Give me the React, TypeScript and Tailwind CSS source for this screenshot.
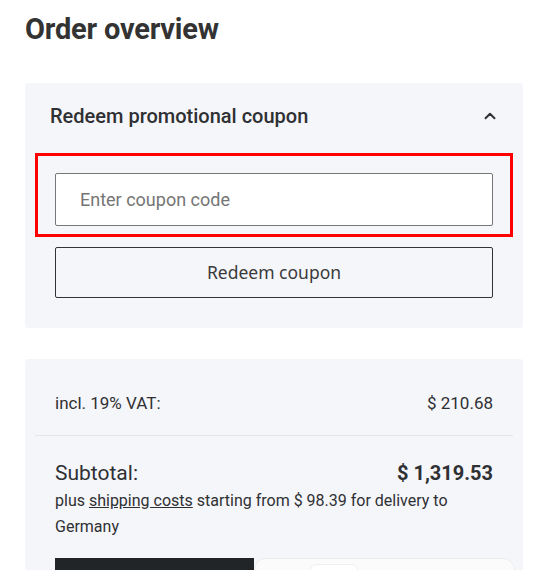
import { ChevronUp } from 'lucide-react';

const display = { fontFamily: 'Roboto, "Noto Sans", sans-serif' };

export default function App() {
  return (
    <div className="min-h-[570px] bg-white text-[#2f3033]" style={display}>
      <div className="pl-[25px] pr-[11px] pt-[12px]">
        <h1 className="text-[29px] font-bold leading-[34px] tracking-[-0.2px] text-[#333]">Order overview</h1>

        {/* coupon panel */}
        <div className="mt-[37px] rounded-[3px] bg-[#f5f6fa] pb-[30px]">
          <div className="flex h-[64px] items-center justify-between pl-[25px] pr-[24px] pt-[2px]">
            <span className="text-[20px] font-medium text-[#2f3033]">Redeem promotional coupon</span>
            <ChevronUp className="h-[18px] w-[18px] text-[#2f3033]" strokeWidth={2.6} />
          </div>
          <div className="mx-[10px] mt-[6px] border-[3px] border-[#ff0000] px-[17px] pb-[8px] pt-[17px]">
            <input
              className="block h-[53px] w-full rounded-[2px] border border-[#777] bg-white px-[24px] text-[18px] text-[#333] outline-none placeholder:text-[#757575]"
              placeholder="Enter coupon code"
            />
          </div>
          <button
            className="mx-[30px] mt-[10px] flex h-[51px] w-[438px] items-center justify-center rounded-[2px] border border-[#333] text-[17.5px] text-[#3a3a3a]"
            style={{ fontFamily: '"Noto Sans", "Open Sans", sans-serif' }}
          >
            Redeem coupon
          </button>
        </div>

        {/* totals panel */}
        <div className="mt-[31px] rounded-[3px] bg-[#f5f6fa] px-[10px] pt-[32px]">
          <div className="flex items-center justify-between px-[20px] text-[17px] leading-[24px]">
            <span>incl. 19% VAT:</span>
            <span>$ 210.68</span>
          </div>
          <div className="mt-[20px] border-t border-[#e3e5ea]" />
          <div className="px-[20px] pt-[23px]">
            <div className="flex items-center justify-between leading-[28px]">
              <span className="text-[21px]">Subtotal:</span>
              <span className="text-[20px] font-bold">$ 1,319.53</span>
            </div>
            <p className="mt-[1px] text-[16px] leading-[26px]">
              plus <a className="underline" href="#">shipping costs</a> starting from $ 98.39 for delivery to Germany
            </p>
            <div className="-mr-[22px] mt-[18px] flex h-[24px] overflow-hidden rounded-tr-[12px]">
              <div className="w-[199px] bg-[#222528]" />
              <div className="relative flex-1 rounded-t-[12px] border border-[#ececec] bg-[#fbfbfb]">
                <div className="absolute left-[55px] top-[5px] h-[20px] w-[48px] rounded-[6px] border border-[#efefef] bg-white" />
              </div>
            </div>
          </div>
        </div>
      </div>
    </div>
  );
}
